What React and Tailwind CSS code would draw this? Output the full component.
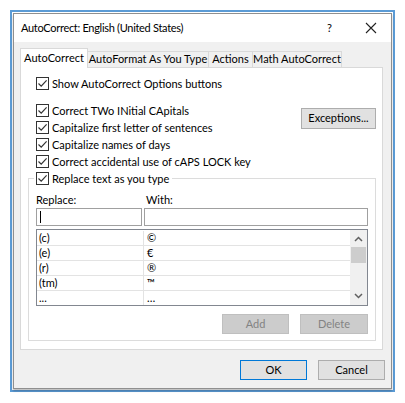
import React from 'react';

const Check = () => (
  <span className="w-[13px] h-[13px] border border-[#333333] bg-white flex items-center justify-center shrink-0">
    <svg width="11" height="11" viewBox="0 0 11 11" fill="none">
      <path d="M1.5 5.5 L4.2 8.2 L9.6 2.4" stroke="#333333" strokeWidth="1.2" />
    </svg>
  </span>
);

const CheckRow = ({ label }) => (
  <div className="h-[17px] flex items-center gap-[3px] whitespace-nowrap">
    <Check />
    <span className="leading-none">{label}</span>
  </div>
);

const entries = [
  ['(c)', '©'],
  ['(e)', '€'],
  ['(r)', '®'],
  ['(tm)', '™'],
  ['...', '…'],
];

export default function App() {
  return (
    <div className="w-[405px] h-[403px] bg-white pt-[10px] pl-[10px] text-[11px] text-black font-['Lato','Noto_Sans',sans-serif]">
      <div className="w-[385px] h-[382px] border-2 border-[#5b9bd5] p-px bg-white">
        <div className="h-full flex flex-col bg-[#f0f0f0] border border-[#8f8f8f] shadow-[0_2px_2px_rgba(0,0,0,0.25)]">
          {/* Title bar */}
          <div className="h-[28px] bg-white flex items-center pl-[7px] pr-[14px] shrink-0 text-[11px]">
            <span className="flex-1 tracking-[-0.3px]">AutoCorrect: English (United States)</span>
            <span className="mr-[33px]">?</span>
            <svg width="12" height="12" viewBox="0 0 12 12">
              <path d="M1 1 L11 11 M11 1 L1 11" stroke="#222" strokeWidth="1.1" />
            </svg>
          </div>

          {/* Tabs */}
          <div className="mt-[6px] ml-[6px] flex items-end h-[20px] relative z-10 whitespace-nowrap">
            <div className="w-[68px] h-[20px] bg-white border border-b-0 border-[#d9d9d9] flex items-center justify-center">
              AutoCorrect
            </div>
            <div className="w-[121px] h-[17px] border border-l-0 border-[#d9d9d9] flex items-center justify-center">
              AutoFormat As You Type
            </div>
            <div className="w-[44px] h-[17px] border border-l-0 border-[#d9d9d9] flex items-center justify-center">
              Actions
            </div>
            <div className="w-[89px] h-[17px] border border-l-0 border-[#d9d9d9] flex items-center justify-center">
              Math AutoCorrect
            </div>
          </div>

          {/* Panel */}
          <div className="ml-[6px] mt-[-1px] w-[363px] h-[283px] bg-white border border-[#d9d9d9] flex flex-col shrink-0">
            <div className="pt-[7px] pl-[15px]">
              <CheckRow label="Show AutoCorrect Options buttons" />
            </div>
            <div className="mt-[2px] ml-[15px] mr-[6px] h-px bg-[#c4c4c4]" />

            <div className="mt-[8px] pl-[15px] pr-[6px] flex">
              <div className="flex-1 flex flex-col">
                <CheckRow label="Correct TWo INitial CApitals" />
                <CheckRow label="Capitalize first letter of sentences" />
                <CheckRow label="Capitalize names of days" />
                <CheckRow label="Correct accidental use of cAPS LOCK key" />
              </div>
              <button className="mt-[6px] w-[75px] h-[21px] bg-[#e1e1e1] border border-[#adadad] flex items-center justify-center">
                Exceptions...
              </button>
            </div>

            {/* Replace group */}
            <fieldset className="ml-[7px] mr-[6px] mb-[8px] flex-1 border border-[#dcdcdc] px-[7px] pb-[6px] min-w-0">
              <legend className="ml-[-2px] pl-[2px] pr-[3px]">
                <CheckRow label="Replace text as you type" />
              </legend>
              <div className="mt-[6px] h-[14px] flex items-center">
                <span className="w-[110px]">Replace:</span>
                <span>With:</span>
              </div>
              <div className="mt-px flex gap-[2px]">
                <div className="w-[106px] h-[18px] bg-white border border-[#a0a0a0] flex items-center pl-[3px]">
                  <span className="w-px h-[12px] bg-black" />
                </div>
                <div className="flex-1 h-[18px] bg-white border border-[#a0a0a0]" />
              </div>

              <div className="mt-[3px] h-[77px] border border-[#828790] bg-white flex overflow-hidden">
                <div className="flex-1 pt-px">
                  {entries.map(([a, b]) => (
                    <div key={a} className="h-[15px] flex border-b border-[#e3e3e3]">
                      <span className="w-[107px] pl-[2px] border-r border-[#e3e3e3] flex items-center">{a}</span>
                      <span className="pl-[3px] flex items-center">{b}</span>
                    </div>
                  ))}
                </div>
                <div className="w-[17px] bg-[#f0f0f0] flex flex-col items-center">
                  <svg className="mt-[6px]" width="9" height="6" viewBox="0 0 9 6">
                    <path d="M1 5 L4.5 1.5 L8 5" stroke="#606060" strokeWidth="1.5" fill="none" />
                  </svg>
                  <div className="mt-[5px] w-[15px] h-[16px] bg-[#cdcdcd]" />
                  <div className="flex-1" />
                  <svg className="mb-[6px]" width="9" height="6" viewBox="0 0 9 6">
                    <path d="M1 1 L4.5 4.5 L8 1" stroke="#606060" strokeWidth="1.5" fill="none" />
                  </svg>
                </div>
              </div>

              <div className="mt-[8px] flex justify-end gap-[11px]">
                <div className="w-[67px] h-[20px] bg-[#cccccc] border border-[#bfbfbf] text-[#838383] flex items-center justify-center">Add</div>
                <div className="w-[68px] h-[20px] bg-[#cccccc] border border-[#bfbfbf] text-[#838383] flex items-center justify-center">Delete</div>
              </div>
            </fieldset>
          </div>

          {/* Dialog buttons */}
          <div className="mt-[10px] mr-[6px] flex justify-end gap-[11px]">
            <button className="w-[67px] h-[20px] bg-[#e1e1e1] border border-[#0078d7] flex items-center justify-center">OK</button>
            <button className="w-[67px] h-[20px] bg-[#e1e1e1] border border-[#adadad] flex items-center justify-center">Cancel</button>
          </div>
        </div>
      </div>
    </div>
  );
}
